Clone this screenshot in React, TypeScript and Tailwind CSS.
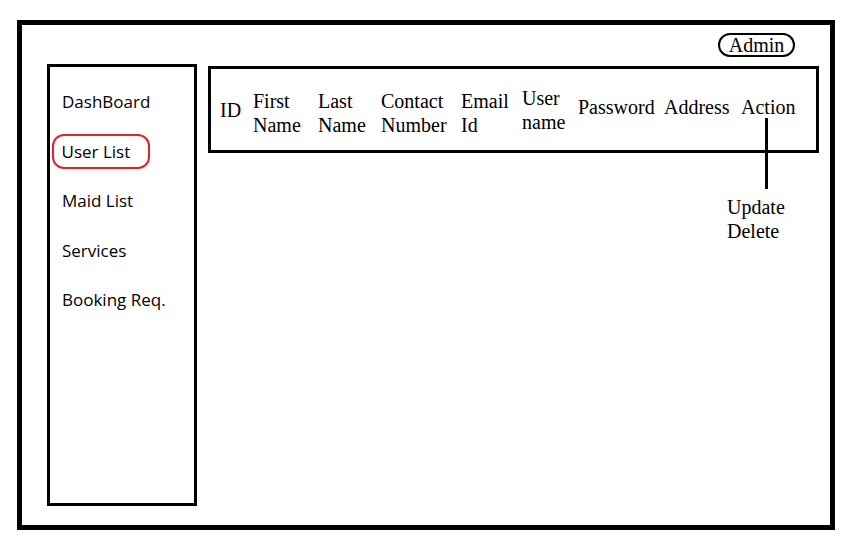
const serif = { fontFamily: '"Liberation Serif", "Times New Roman", serif' };

const navItems = ["DashBoard", "User List", "Maid List", "Services", "Booking Req."];

type Col = { lines: string[]; w: string; mt: string };

const cols: Col[] = [
  { lines: ["ID"], w: "w-[33px]", mt: "mt-[29px]" },
  { lines: ["First", "Name"], w: "w-[65px]", mt: "mt-[20px]" },
  { lines: ["Last", "Name"], w: "w-[63px]", mt: "mt-[20px]" },
  { lines: ["Contact", "Number"], w: "w-[80px]", mt: "mt-[20px]" },
  { lines: ["Email", "Id"], w: "w-[61px]", mt: "mt-[20px]" },
  { lines: ["User", "name"], w: "w-[56px]", mt: "mt-[17px]" },
  { lines: ["Password"], w: "w-[86px]", mt: "mt-[26px]" },
  { lines: ["Address"], w: "w-[77px]", mt: "mt-[26px]" },
];

export default function App() {
  return (
    <div className="w-[862px] h-[549px] bg-white pt-[20px] pl-[17px]">
      <div className="w-[818px] h-[510px] border-[5px] border-black flex flex-col">
        {/* top bar */}
        <div className="flex justify-end pt-[8px] pr-[35px]">
          <div
            className="h-[24px] w-[77px] border-2 border-black rounded-[12px] flex items-center justify-center text-[20px] leading-none text-black"
            style={serif}
          >
            Admin
          </div>
        </div>

        <div className="flex flex-1 pl-[25px] pr-[11px] pb-[19px] pt-[7px] gap-[11px]">
          {/* sidebar */}
          <div
            className="w-[150px] border-[3px] border-black pt-[10px] pl-[2px]"
            style={{ fontFamily: '"Open Sans", "Noto Sans", sans-serif' }}
          >
            {navItems.map((item) =>
              item === "User List" ? (
                <div key={item} className="h-[49.5px] flex items-center">
                  <div className="w-[98px] h-[35px] border-[2.5px] border-[#e3212b] rounded-[12px] flex items-center pl-[7.5px] text-[17px] text-black">
                    {item}
                  </div>
                </div>
              ) : (
                <div key={item} className="h-[49.5px] flex items-center pl-[10px] text-[17px] text-black">
                  {item}
                </div>
              )
            )}
          </div>

          {/* main */}
          <div className="flex-1 flex flex-col mt-[2px]" style={serif}>
            <div className="h-[87px] border-[3px] border-black flex items-start pl-[9px] text-[20px] leading-[24px] text-black">
              {cols.map((c) => (
                <div key={c.lines.join()} className={`${c.w} ${c.mt} shrink-0 whitespace-nowrap`}>
                  {c.lines.map((l) => (
                    <div key={l}>{l}</div>
                  ))}
                </div>
              ))}
              <div className="relative mt-[26px] whitespace-nowrap">
                Action
                <div className="absolute left-[24px] top-[23px] w-[3px] h-[71px] bg-black" />
              </div>
            </div>
            <div className="mt-[42px] pl-[519px] text-[20px] leading-[24px] text-black">
              <div>Update</div>
              <div>Delete</div>
            </div>
          </div>
        </div>
      </div>
    </div>
  );
}
